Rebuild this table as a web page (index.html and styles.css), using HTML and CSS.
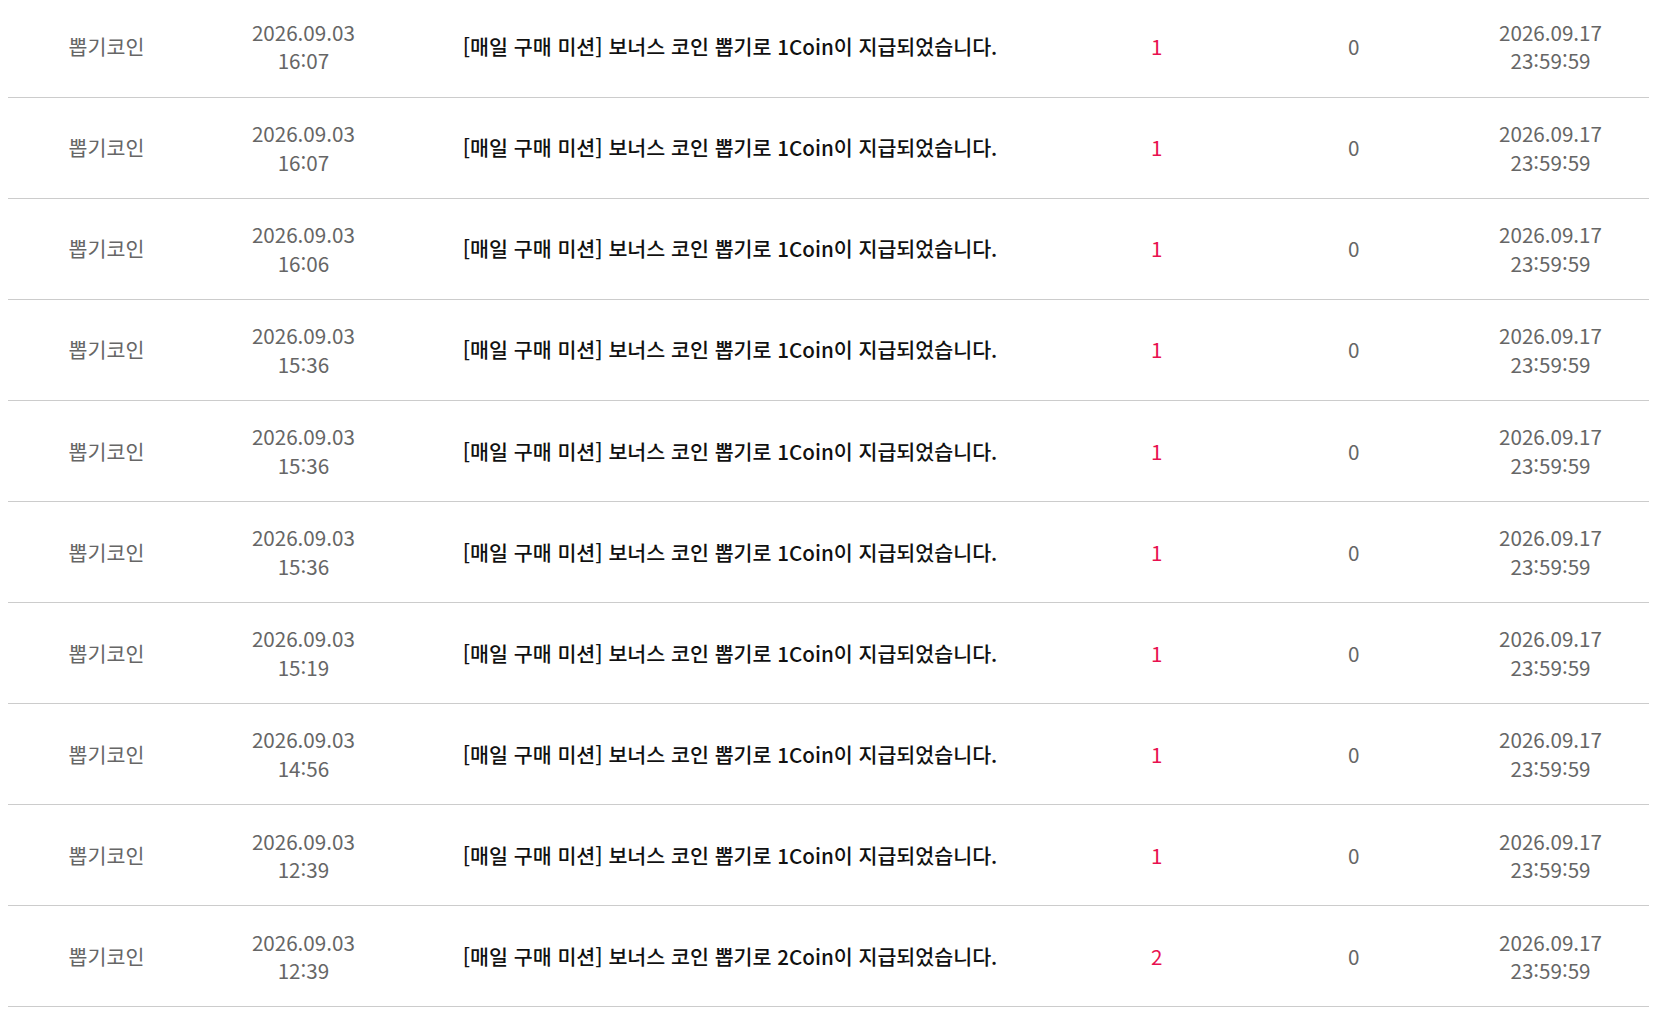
FILE: index.html
```html
<!DOCTYPE html>
<html lang="ko">
<head>
  <meta charset="UTF-8" />
  <meta name="viewport" content="width=device-width, initial-scale=1.0"/>
  <title>코인 내역</title>
  <link rel="stylesheet" href="styles.css">
</head>
<body>

  <table class="history">
    <colgroup>
      <col class="c-type">
      <col class="c-date">
      <col class="c-desc">
      <col class="c-num">
      <col class="c-num">
      <col class="c-date">
    </colgroup>
    <tbody id="historyBody"></tbody>
  </table>

  <script>
    const rows = [
      { time: '16:07', coin: 1 },
      { time: '16:07', coin: 1 },
      { time: '16:06', coin: 1 },
      { time: '15:36', coin: 1 },
      { time: '15:36', coin: 1 },
      { time: '15:36', coin: 1 },
      { time: '15:19', coin: 1 },
      { time: '14:56', coin: 1 },
      { time: '12:39', coin: 1 },
      { time: '12:39', coin: 2 }
    ];

    const body = document.getElementById("historyBody");

    rows.forEach(row => {
      const tr = document.createElement("tr");
      tr.innerHTML = `
        <td class="muted">뽑기코인</td>
        <td class="muted">2026.09.03<br>${row.time}</td>
        <td class="desc">[매일 구매 미션] 보너스 코인 뽑기로 ${row.coin}Coin이 지급되었습니다.</td>
        <td class="plus">${row.coin}</td>
        <td class="muted">0</td>
        <td class="muted">2026.09.17<br>23:59:59</td>`;
      body.appendChild(tr);
    });
  </script>

</body>
</html>
```

FILE: styles.css
```css
* {
  box-sizing: border-box;
}

body {
  margin: 0;
  padding: 0 18px 0 8px;
  background: #fff;
  font-family: "Noto Sans CJK KR", "Noto Sans", sans-serif;
  font-size: 20.6px;
  color: #666;
}

.history {
  width: 100%;
  margin-top: -4px;
  border-collapse: collapse;
  table-layout: fixed;
}

.c-type,
.c-date,
.c-num {
  width: 12%;
}

.c-desc {
  width: 40%;
}

.history td {
  height: 101.1px;
  padding: 0;
  border-bottom: 1px solid #ccc;
  text-align: center;
  vertical-align: middle;
  line-height: 28.8px;
}

.muted {
  color: #666;
}

.desc {
  color: #111;
  font-weight: 500;
}

.plus {
  color: #e8114f;
}
```
